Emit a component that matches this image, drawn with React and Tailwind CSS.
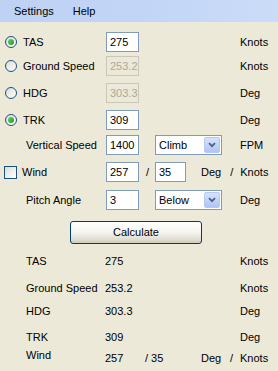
import React from "react";

function Radio({ checked }) {
  return (
    <span className="relative flex h-[12px] w-[12px] items-center justify-center rounded-full border border-[#1c5180] bg-gradient-to-br from-[#dcdcd6] to-white">
      {checked && (
        <span className="h-[6px] w-[6px] rounded-full bg-gradient-to-br from-[#5ed85e] to-[#1f9a1f]" />
      )}
    </span>
  );
}

function TextBox({ value, disabled, w = "w-[33px]" }) {
  return (
    <div
      className={
        "flex h-[20px] items-center border pl-[3px] " +
        w +
        " " +
        (disabled
          ? "border-[#c9c7ba] bg-[#ece9d8] text-[#aca899]"
          : "border-[#7f9db9] bg-white text-black")
      }
    >
      {value}
    </div>
  );
}

function Select({ value }) {
  return (
    <div className="flex h-[20px] w-[67px] items-center border border-[#7f9db9] bg-white">
      <span className="flex-1 pl-[3px]">{value}</span>
      <span className="mr-[1px] flex h-[16px] w-[16px] items-center justify-center rounded-[2px] border border-[#b4c8f6] bg-gradient-to-b from-[#d6e2fc] to-[#afc5f6]">
        <svg width="8" height="6" viewBox="0 0 8 6">
          <path d="M1 1.2 L4 4.2 L7 1.2" fill="none" stroke="#4d6185" strokeWidth="1.8" />
        </svg>
      </span>
    </div>
  );
}

export default function App() {
  return (
    <div
      className="h-[371px] w-[278px] overflow-hidden bg-[#ece9d8] text-[11px] leading-none text-black"
      style={{ fontFamily: '"Liberation Sans", Arial, sans-serif' }}
    >
      <div className="flex h-[22px] items-center bg-gradient-to-r from-[#bfd2f4] via-[#c3d5f6] to-[#cadcf8]">
        <span className="ml-[14px]">Settings</span>
        <span className="ml-[19px]">Help</span>
      </div>

      {/* TAS */}
      <div className="mt-[10px] flex h-[20px] items-center">
        <div className="flex w-[106px] items-center pl-[5px]">
          <Radio checked />
          <span className="ml-[6px]">TAS</span>
        </div>
        <TextBox value="275" />
        <span className="ml-[101px]">Knots</span>
      </div>

      {/* Ground Speed */}
      <div className="mt-[4px] flex h-[20px] items-center">
        <div className="flex w-[106px] items-center pl-[5px]">
          <Radio />
          <span className="ml-[6px]">Ground Speed</span>
        </div>
        <TextBox value="253.2" disabled />
        <span className="ml-[101px]">Knots</span>
      </div>

      {/* HDG */}
      <div className="mt-[7px] flex h-[20px] items-center">
        <div className="flex w-[106px] items-center pl-[5px]">
          <Radio />
          <span className="ml-[6px]">HDG</span>
        </div>
        <TextBox value="303.3" disabled />
        <span className="ml-[101px]">Deg</span>
      </div>

      {/* TRK */}
      <div className="mt-[7px] flex h-[20px] items-center">
        <div className="flex w-[106px] items-center pl-[5px]">
          <Radio checked />
          <span className="ml-[6px]">TRK</span>
        </div>
        <TextBox value="309" />
        <span className="ml-[101px]">Deg</span>
      </div>

      {/* Vertical Speed */}
      <div className="mt-[5px] flex h-[20px] items-center">
        <div className="flex w-[106px] items-center pl-[26px]">
          <span>Vertical Speed</span>
        </div>
        <TextBox value="1400" />
        <div className="ml-[16px]">
          <Select value="Climb" />
        </div>
        <span className="ml-[18px]">FPM</span>
      </div>

      {/* Wind */}
      <div className="mt-[7px] flex h-[20px] items-center">
        <div className="flex w-[106px] items-center pl-[4px]">
          <span className="h-[13px] w-[13px] border border-[#1c5180] bg-gradient-to-br from-[#dcdcd6] to-white" />
          <span className="ml-[5px]">Wind</span>
        </div>
        <TextBox value="257" />
        <span className="ml-[7px] w-[9px]">/</span>
        <TextBox value="35" w="w-[31px]" />
        <span className="ml-[15px]">Deg</span>
        <span className="ml-[9px]">/</span>
        <span className="ml-[7px]">Knots</span>
      </div>

      {/* Pitch Angle */}
      <div className="mt-[8px] flex h-[20px] items-center">
        <div className="flex w-[106px] items-center pl-[26px]">
          <span>Pitch Angle</span>
        </div>
        <TextBox value="3" />
        <div className="ml-[16px]">
          <Select value="Below" />
        </div>
        <span className="ml-[18px]">Deg</span>
      </div>

      {/* Calculate */}
      <div className="mt-[11px] flex pl-[70px]">
        <button className="h-[23px] w-[132px] rounded-[3px] border border-[#003c74] bg-gradient-to-b from-white via-[#f4f4f0] to-[#d6d0c5] shadow-[inset_0_-2px_0_#d8d2bd]">
          Calculate
        </button>
      </div>

      {/* Results */}
      <div className="mt-[10px] flex h-[14px] items-center">
        <span className="w-[105px] pl-[26px]">TAS</span>
        <span className="w-[135px]">275</span>
        <span>Knots</span>
      </div>
      <div className="mt-[13px] flex h-[14px] items-center">
        <span className="w-[105px] pl-[26px]">Ground Speed</span>
        <span className="w-[135px]">253.2</span>
        <span>Knots</span>
      </div>
      <div className="mt-[9px] flex h-[14px] items-center">
        <span className="w-[105px] pl-[26px]">HDG</span>
        <span className="w-[135px]">303.3</span>
        <span>Deg</span>
      </div>
      <div className="mt-[12px] flex h-[14px] items-center">
        <span className="w-[105px] pl-[26px]">TRK</span>
        <span className="w-[135px]">309</span>
        <span>Deg</span>
      </div>
      <div className="mt-[4px] flex h-[14px] items-center">
        <span className="w-[105px] pl-[26px]">Wind</span>
        <span className="mt-[6px] w-[40px]">257</span>
        <span className="mt-[6px] w-[56px]">/ 35</span>
        <span className="mt-[6px] w-[29px]">Deg</span>
        <span className="mt-[6px] w-[10px]">/</span>
        <span className="mt-[6px]">Knots</span>
      </div>
    </div>
  );
}
